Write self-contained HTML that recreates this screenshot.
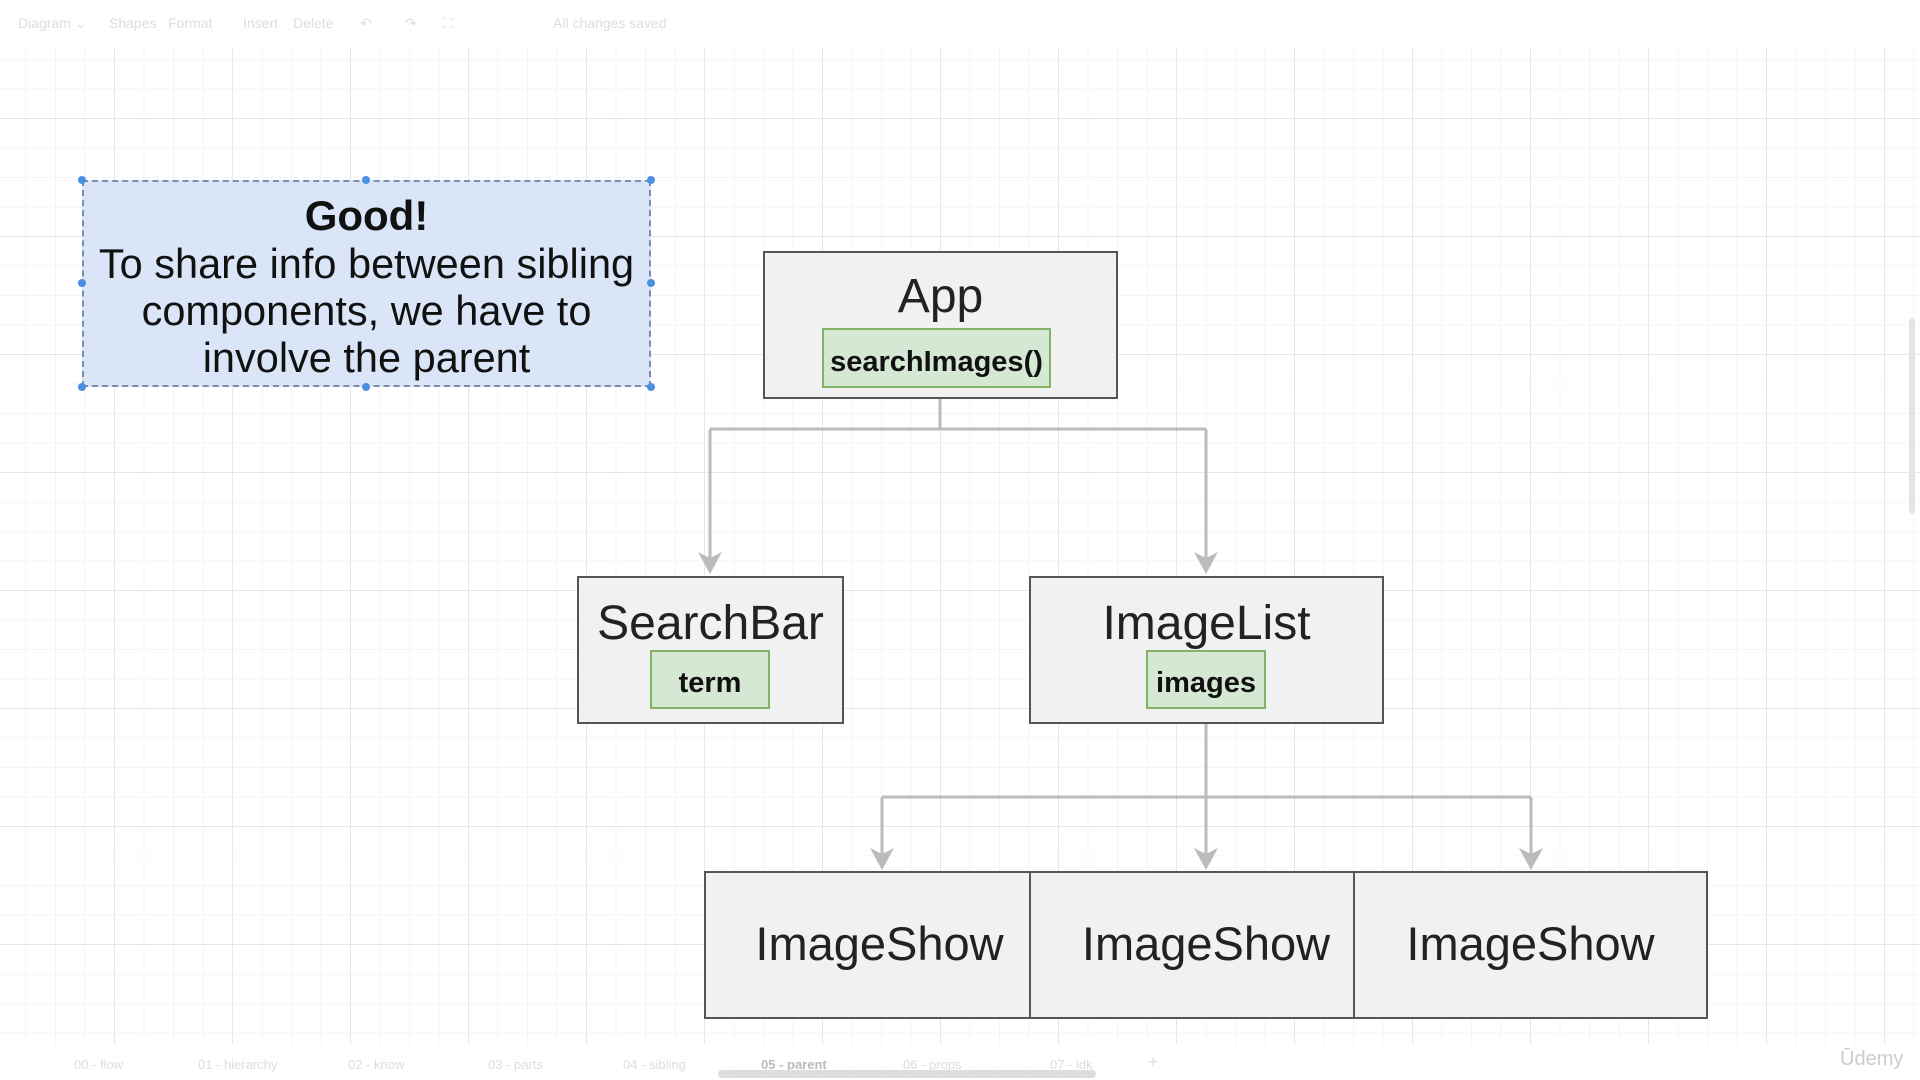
<!DOCTYPE html>
<html><head><meta charset="utf-8"><style>
*{margin:0;padding:0;box-sizing:border-box}
body{width:1920px;height:1080px;overflow:hidden;background:#fff;font-family:"Liberation Sans",sans-serif;position:relative;
background-image:linear-gradient(#e6e6e6 1px,transparent 1px),linear-gradient(90deg,#e6e6e6 1px,transparent 1px),linear-gradient(#f4f4f4 1px,transparent 1px),linear-gradient(90deg,#f4f4f4 1px,transparent 1px);
background-size:118px 118px,118px 118px,29.5px 29.5px,29.5px 29.5px;background-position:-4px 0,-4px 0,-4px 0,-4px 0}
.box{position:absolute;background:#f1f1f1;border:2px solid #555;text-align:center;color:#222}
.g{position:absolute;background:#d5e8d4;border:2px solid #82b366;font-weight:bold;color:#111;font-size:29px;display:flex;align-items:center;justify-content:center;padding-top:8px}
.t{position:absolute;left:0;right:0;font-size:48px}
.t2{position:absolute;left:0;right:0;font-size:47px;top:43px}
.top{position:absolute;top:0;left:0;right:0;height:48px;background:rgba(255,255,255,.85);color:#ddd;font-size:14px}
.top span{position:absolute;top:15px}
.bot{position:absolute;left:0;right:0;top:1044px;height:36px;background:rgba(255,255,255,.9);color:#ddd;font-size:13px}
.bot span{position:absolute;top:13px}
</style></head><body>
<div class="top"><span style="left:18px">Diagram ⌄</span><span style="left:109px">Shapes</span><span style="left:168px">Format</span><span style="left:243px">Insert</span><span style="left:293px">Delete</span><span style="left:360px">↶</span><span style="left:405px">↷</span><span style="left:443px">⛶</span><span style="left:553px">All changes saved</span></div>
<svg width="1920" height="1080" style="position:absolute;left:0;top:0">
<g stroke="#bbb" stroke-width="3" fill="none">
<path d="M940 399V429M710 429H1206M710 429V560M1206 429V560"/>
<path d="M1206 724V797M882 797H1531M882 797V858M1206 797V858M1531 797V858"/>
</g>
<g fill="#bbb">
<path d="M698 552L710 574L722 552L710 558Z"/><path d="M1194 552L1206 574L1218 552L1206 558Z"/>
<path d="M870 848L882 870L894 848L882 854Z"/><path d="M1194 848L1206 870L1218 848L1206 854Z"/><path d="M1519 848L1531 870L1543 848L1531 854Z"/>
</g>
</svg>
<div style="position:absolute;left:82px;top:180px;width:569px;height:207px;background:#dae6f8;border:2px dashed #7a8fb0;text-align:center;color:#111">
<div style="font-weight:bold;font-size:42px;margin-top:10px;line-height:48px">Good!</div>
<div style="font-size:41.5px;line-height:47px">To share info between sibling<br>components, we have to<br>involve the parent</div>
</div>
<svg width="1920" height="1080" style="position:absolute;left:0;top:0" fill="#4a90e2">
<circle cx="82" cy="180" r="4"/><circle cx="366" cy="180" r="4"/><circle cx="651" cy="180" r="4"/><circle cx="82" cy="283" r="4"/><circle cx="651" cy="283" r="4"/><circle cx="82" cy="387" r="4"/><circle cx="366" cy="387" r="4"/><circle cx="651" cy="387" r="4"/>
</svg>
<div class="box" style="left:763px;top:251px;width:355px;height:148px"><div class="t" style="top:16px">App</div></div>
<div class="g" style="left:822px;top:328px;width:229px;height:60px">searchImages()</div>
<div class="box" style="left:577px;top:576px;width:267px;height:148px"><div class="t" style="top:18px">SearchBar</div></div>
<div class="g" style="left:650px;top:650px;width:120px;height:59px">term</div>
<div class="box" style="left:1029px;top:576px;width:355px;height:148px"><div class="t" style="top:18px">ImageList</div></div>
<div class="g" style="left:1146px;top:650px;width:120px;height:59px">images</div>
<div class="box" style="left:704px;top:871px;width:327px;height:148px"><div class="t2" style="left:24px">ImageShow</div></div>
<div class="box" style="left:1029px;top:871px;width:326px;height:148px"><div class="t2" style="left:28px">ImageShow</div></div>
<div class="box" style="left:1353px;top:871px;width:355px;height:148px"><div class="t2">ImageShow</div></div>
<div style="position:absolute;left:1909px;top:318px;width:6px;height:196px;background:#e4e4e4;border-radius:3px"></div>
<div class="bot"><span style="left:74px">00 - flow</span><span style="left:198px">01 - hierarchy</span><span style="left:348px">02 - know</span><span style="left:488px">03 - parts</span><span style="left:623px">04 - sibling</span><span style="left:761px;color:#bbb;font-weight:bold">05 - parent</span><span style="left:903px">06 - props</span><span style="left:1050px">07 - idk</span><span style="left:1148px;font-size:18px;top:8px">+</span><span style="left:1840px;font-size:20px;top:4px;color:#ccc">Ūdemy</span>
<div style="position:absolute;left:718px;top:26px;width:378px;height:8px;background:#ddd;border-radius:4px"></div></div>
</body></html>
